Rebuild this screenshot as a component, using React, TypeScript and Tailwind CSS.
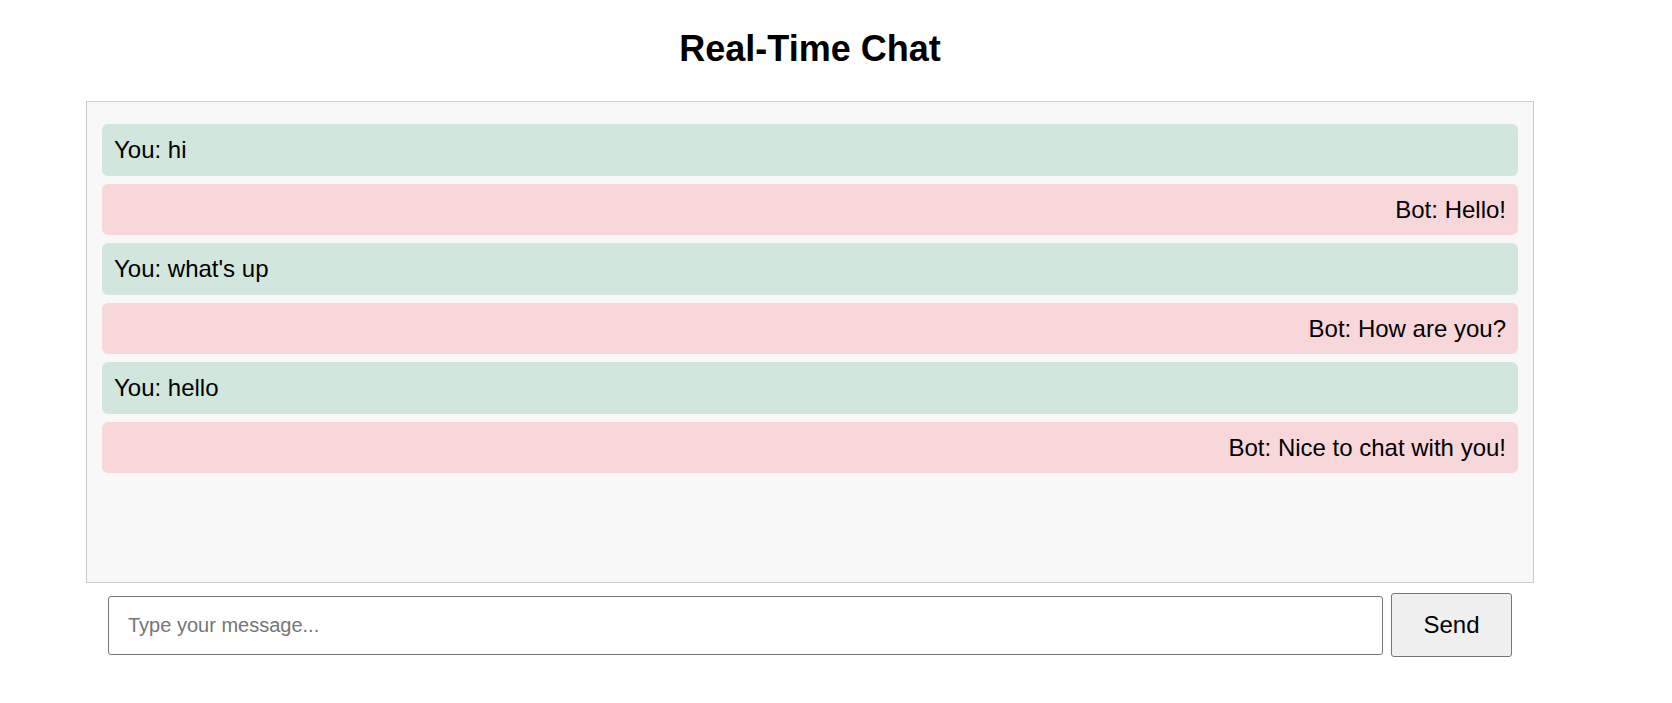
import React from "react";

const messages = [
  { from: "You", text: "hi" },
  { from: "Bot", text: "Hello!" },
  { from: "You", text: "what's up" },
  { from: "Bot", text: "How are you?" },
  { from: "You", text: "hello" },
  { from: "Bot", text: "Nice to chat with you!" },
];

export default function App() {
  return (
    <div
      className="min-h-screen bg-white text-black"
      style={{ fontFamily: '"Liberation Sans", Arial, sans-serif' }}
    >
      <div className="ml-[86px] w-[1448px] flex flex-col">
        <h1 className="mt-[28px] text-center text-[36px] font-bold leading-[41px]">
          Real-Time Chat
        </h1>
        <div className="mt-[32px] h-[482px] border border-[#cccccc] bg-[#f8f8f8] px-[15px] pt-[22px] flex flex-col gap-[8px]">
          {messages.map((m, i) => (
            <div
              key={i}
              className={
                m.from === "You"
                  ? "rounded-[6px] bg-[#d1e7dd] px-[12px] py-[12px] text-[24px] leading-[27.5px] text-left"
                  : "rounded-[6px] bg-[#f8d7da] px-[12px] py-[12px] text-[24px] leading-[27.5px] text-right"
              }
            >
              {m.from}: {m.text}
            </div>
          ))}
        </div>
        <div className="mt-[10px] px-[22px] flex items-center gap-[8px]">
          <input
            type="text"
            placeholder="Type your message..."
            className="h-[59px] flex-1 rounded-[3px] border border-[#767676] bg-white px-[19px] text-[20px] placeholder:text-[#757575] outline-none"
            style={{ fontFamily: '"Liberation Sans", Arial, sans-serif' }}
          />
          <button
            className="h-[64px] w-[121px] rounded-[3px] border border-[#767676] bg-[#efefef] text-[24px] text-black"
            style={{ fontFamily: '"Liberation Sans", Arial, sans-serif' }}
          >
            Send
          </button>
        </div>
      </div>
    </div>
  );
}
